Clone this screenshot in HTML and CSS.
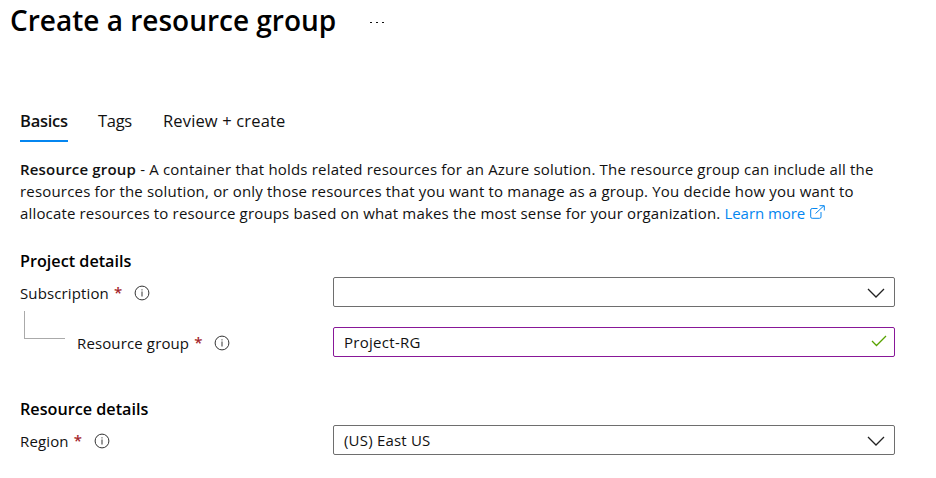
FILE: index.html
```html
<!DOCTYPE html>
<html lang="en">
<head>
<meta charset="utf-8">
<title>Create a resource group</title>
<link rel="stylesheet" href="styles.css">
</head>
<body>
<header class="page-header">
  <h1 class="title">Create a resource group</h1>
  <button class="more" aria-label="More"><i></i><i></i><i></i></button>
</header>
<main class="content">
  <nav class="tabs">
    <a class="tab tab-active">Basics</a>
    <a class="tab tab-tags">Tags</a>
    <a class="tab tab-review">Review + create</a>
  </nav>
  <p class="intro">
    <strong>Resource group</strong> - A container that holds related resources for an Azure solution. The resource group can include all the<br>
    resources for the solution, or only those resources that you want to manage as a group. You decide how you want to<br>
    <span class="line-last">allocate resources to resource groups based on what makes the most sense for your organization.</span>
    <a class="learn">Learn more<svg class="external" width="15" height="14" viewBox="0 0 15 14"><path d="M7.500 3.500H2.200Q.7 3.500.7 5v6.800q0 1.500 1.500 1.500H9.500q1.500 0 1.500-1.500V7M5.500 8.500L14 .7M9.500.7H14.300V5.500"/></svg></a>
  </p>
  <section class="project">
    <h2 class="heading">Project details</h2>
    <div class="row">
      <label class="label">Subscription</label><span class="required">*</span>
      <svg class="info" width="16" height="16" viewBox="0 0 16 16"><circle cx="8" cy="8" r="6.900"/><path d="M8 6.500V11.500M8 4.300V5.400"/></svg>
      <div class="field"><svg class="chevron" width="18" height="10" viewBox="0 0 18 10"><path d="M1 1L9 9L17 1"/></svg></div>
    </div>
    <div class="row row-child">
      <span class="branch"></span>
      <label class="label">Resource group</label><span class="required">*</span>
      <svg class="info" width="16" height="16" viewBox="0 0 16 16"><circle cx="8" cy="8" r="6.900"/><path d="M8 6.500V11.500M8 4.300V5.400"/></svg>
      <div class="field field-valid"><span class="value value-name">Project-RG</span><svg class="check" width="16" height="12" viewBox="0 0 16 12"><path d="M1 6L5.500 10.500L15 1"/></svg></div>
    </div>
  </section>
  <section class="resource">
    <h2 class="heading">Resource details</h2>
    <div class="row">
      <label class="label">Region</label><span class="required">*</span>
      <svg class="info" width="16" height="16" viewBox="0 0 16 16"><circle cx="8" cy="8" r="6.900"/><path d="M8 6.500V11.500M8 4.300V5.400"/></svg>
      <div class="field"><span class="value">(US) East US</span><svg class="chevron" width="18" height="10" viewBox="0 0 18 10"><path d="M1 1L9 9L17 1"/></svg></div>
    </div>
  </section>
</main>
</body>
</html>
```
FILE: styles.css
```css
* { box-sizing: border-box; }
body {
  margin: 0;
  background: #fff;
  color: #111;
  font: 15px/22px "Open Sans", "Noto Sans", sans-serif;
}
.page-header { display: flex; align-items: center; height: 42px; padding-left: 10px; }
.title { margin: -2px 0 0; width: 360px; font-size: 28px; line-height: 42px; font-weight: 600; color: #000; white-space: nowrap; }
.more { display: flex; gap: 4px; padding: 2px 0 0; border: 0; background: none; }
.more i { width: 2px; height: 1px; background: #111; }
.content { padding: 62px 0 0 20px; }
.tabs { display: flex; height: 38px; }
.tab { height: 38px; font-size: 16.500px; line-height: 34px; white-space: nowrap; }
.tab-active { width: 48px; font-weight: 600; letter-spacing: -.25px; border-bottom: 2px solid #0486f0; }
.tab-tags { width: 36px; margin-left: 30px; letter-spacing: -.3px; }
.tab-review { margin-left: 29px; letter-spacing: .15px; }
.intro { margin: 16px 0 0; white-space: nowrap; letter-spacing: .185px; }
.intro strong { font-weight: 600; }
.line-last { letter-spacing: .16px; }
.learn { color: #0486f0; letter-spacing: -.05px; }
.external { margin-left: 5px; fill: none; stroke: #0486f0; }
.heading { margin: 0; font-size: 16.200px; line-height: 24px; font-weight: 600; color: #000; }
.project { margin-top: 25px; }
.resource { margin-top: 40px; }
.row { display: flex; align-items: center; height: 30px; margin-top: 4px; padding-right: 41px; }
.row-child { margin-top: 20px; }
.label { padding-top: 2px; letter-spacing: .13px; }
.required { width: 8px; margin-left: 5px; color: #a4262c; font-weight: 600; }
.info { margin: 2px 0 0 12px; fill: none; stroke: #333; }
.field { display: flex; align-items: center; width: 562px; height: 30px; margin-left: auto; padding: 0 9px 0 10px; border: 1px solid #6e6e6e; border-radius: 2px; }
.field-valid { padding-right: 7px; border-color: #881798; }
.value { letter-spacing: .2px; }
.value-name { letter-spacing: .28px; }
.chevron, .check { margin-left: auto; fill: none; stroke: #222; stroke-width: 1.300; }
.chevron { margin-top: 2px; }
.check { margin-top: -2px; stroke: #57a300; }
.branch { width: 41px; height: 28px; margin: -38px 12px 0 4px; border: solid #aaa; border-width: 0 0 1px 1px; position: relative; top: 2px; }
```
